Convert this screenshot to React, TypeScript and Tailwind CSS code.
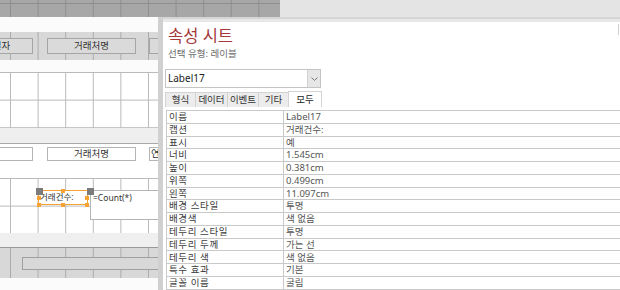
import React from 'react';

const rows: [string, string][] = [
  ['이름', 'Label17'],
  ['캡션', '거래건수:'],
  ['표시', '예'],
  ['너비', '1.545cm'],
  ['높이', '0.381cm'],
  ['위쪽', '0.499cm'],
  ['왼쪽', '11.097cm'],
  ['배경 스타일', '투명'],
  ['배경색', '색 없음'],
  ['테두리 스타일', '투명'],
  ['테두리 두께', '가는 선'],
  ['테두리 색', '색 없음'],
  ['특수 효과', '기본'],
  ['글꼴 이름', '굴림'],
];

const tabs = [
  { name: '형식', w: 'w-[30px]' },
  { name: '데이터', w: 'w-[32px]' },
  { name: '이벤트', w: 'w-[31px]' },
  { name: '기타', w: 'w-[30px]' },
];

// grid backgrounds for the report designer sections
const whiteGrid =
  'bg-white bg-[linear-gradient(to_right,#b9b9b9_1px,transparent_1px),linear-gradient(to_bottom,#b9b9b9_1px,transparent_1px)] bg-size-[27.6px_27.6px] bg-position-[10px_0px]';
const bandGrid =
  'bg-[#d8d8d8] bg-[linear-gradient(to_right,#ababab_1px,transparent_1px)] bg-size-[27.6px_27.6px] bg-position-[10px_0px]';

function Designer() {
  return (
    <div className="w-[158px] flex flex-col overflow-hidden text-[9.5px] leading-none text-[#333]">
      <div className="h-[15px] bg-[#fbfbfb]" />

      {/* page header band */}
      <div className={`h-[28px] relative ${bandGrid}`}>
        <div className="absolute left-[-30px] top-[6px] w-[63px] h-[16px] border border-[#a5a5a5] bg-[#dadada] flex items-center justify-center">
          일자
        </div>
        <div className="absolute left-[47px] top-[6px] w-[89px] h-[16px] border border-[#a5a5a5] bg-[#dadada] flex items-center justify-center">
          거래처명
        </div>
        <div className="absolute left-[149px] top-[6px] w-[40px] h-[16px] border border-[#a5a5a5] bg-[#dadada]" />
      </div>

      <div className="h-[12px] bg-[#fbfbfb]" />
      <div className={`h-[56px] ${whiteGrid}`} />
      <div className="h-[15px] bg-[#efefef]" />

      {/* group header */}
      <div className="h-[35px] relative bg-white border-t border-[#a9a9a9]">
        <div className="absolute left-[-30px] top-[3px] w-[63px] h-[14px] border border-[#b5b5b5] bg-white" />
        <div className="absolute left-[47px] top-[3px] w-[89px] h-[14px] border border-[#b5b5b5] bg-white flex items-center justify-center">
          거래처명
        </div>
        <div className="absolute left-[149px] top-[3px] w-[40px] h-[14px] border border-[#b5b5b5] bg-white flex items-center pl-[1px] whitespace-nowrap">
          연락처
        </div>
      </div>

      {/* detail with selected label */}
      <div className={`h-[55px] relative ${whiteGrid}`}>
        <div className="absolute left-[38px] top-[12px] w-[50px] h-[15px] border border-[#f7a234] bg-white flex items-center pl-[1px] text-[8.5px] whitespace-nowrap">
          거래건수:
        </div>
        <div className="absolute left-[90px] top-[12px] w-[80px] h-[30px] border border-[#b5b5b5] bg-white pl-[2px] pt-[3px] text-[8.5px] whitespace-nowrap">
          =Count(*)
        </div>
        <div className="absolute left-[36px] top-[10px] w-[7px] h-[7px] bg-[#7b7b7b]" />
        <div className="absolute left-[87px] top-[10px] w-[7px] h-[7px] bg-[#7b7b7b]" />
        <div className="absolute left-[61px] top-[11px] w-[4px] h-[4px] bg-[#f7a234]" />
        <div className="absolute left-[37px] top-[18px] w-[4px] h-[4px] bg-[#f7a234]" />
        <div className="absolute left-[85px] top-[18px] w-[4px] h-[4px] bg-[#f7a234]" />
        <div className="absolute left-[37px] top-[25px] w-[4px] h-[4px] bg-[#f7a234]" />
        <div className="absolute left-[61px] top-[25px] w-[4px] h-[4px] bg-[#f7a234]" />
        <div className="absolute left-[85px] top-[25px] w-[4px] h-[4px] bg-[#f7a234]" />
      </div>

      <div className="h-[14px] bg-[#efefef]" />

      {/* page footer band */}
      <div className={`h-[31px] relative border-t border-[#9a9a9a] ${bandGrid}`}>
        <div className="absolute left-[22px] top-[9px] w-[150px] h-[13px] border border-[#a0a0a0] bg-[#d8d8d8]" />
      </div>

      <div className="h-[12px] bg-[#fbfbfb]" />
    </div>
  );
}

function PropertySheet() {
  return (
    <div className="flex-1 flex flex-col border-t-2 border-[#d5d5d5] bg-white relative">
      <div className="h-[3px] bg-[#e7e7e7]" />
      <div className="absolute right-[1px] top-[5px] w-[1px] h-[11px] bg-[#cfcfcf]" />
      <div className="pl-[5px] mt-[2px] text-[16.5px] leading-[23px] text-[#a4373a]">속성 시트</div>
      <div className="pl-[5px] text-[9.5px] leading-[13px] text-[#6a6a6a]">선택 유형: 레이블</div>

      <div className="ml-[2px] mt-[9px] w-[156px] h-[19px] border border-[#c4c4c4] flex">
        <div className="flex-1 pl-[2px] text-[10px] leading-[17px] text-[#222]">Label17</div>
        <div className="w-[13px] bg-[#e6e6e6] border-l border-[#d0d0d0] flex items-center justify-center">
          <svg width="7" height="4" viewBox="0 0 7 4">
            <path d="M0.5 0.5 L3.5 3.5 L6.5 0.5" fill="none" stroke="#777" strokeWidth="1" />
          </svg>
        </div>
      </div>

      <div className="ml-[2px] mt-[3px] h-[16px] flex items-end text-[9.5px] text-[#333] whitespace-nowrap">
        {tabs.map((t) => (
          <div
            key={t.name}
            className={`${t.w} h-[15px] bg-[#ececec] border border-r-0 border-b-0 border-[#d3d3d3] flex items-center justify-center leading-none`}
          >
            {t.name}
          </div>
        ))}
        <div className="w-[34px] h-[16px] bg-white border border-b-0 border-[#d3d3d3] flex items-center justify-center leading-none text-[#222]">
          모두
        </div>
      </div>

      <div className="ml-[3px] mt-[3px] border-l border-t border-[#c9c9c9] text-[9.5px]">
        {rows.map(([k, v]) => (
          <div key={k} className="h-[12.77px] grid grid-cols-[117px_1fr] border-b border-[#c9c9c9]">
            <div className="pl-[2px] border-r border-[#c9c9c9] text-[#3c3c3c] tracking-[0.6px] whitespace-nowrap flex items-center leading-none">
              {k}
            </div>
            <div className="pl-[2px] text-[#555] whitespace-nowrap flex items-center leading-none">{v}</div>
          </div>
        ))}
      </div>
    </div>
  );
}

export default function App() {
  return (
    <div className="w-[620px] h-[290px] overflow-hidden bg-white flex flex-col font-['Noto_Sans','Noto_Sans_CJK_KR',sans-serif]">
      <div className="h-[17px] flex">
        <div className="w-[280px] bg-[#a7a7a7] bg-[linear-gradient(to_right,#8e8e8e_1px,transparent_1px),linear-gradient(to_bottom,#8e8e8e_1px,transparent_1px)] bg-size-[27.6px_27.6px] bg-position-[10px_3px]" />
        <div className="flex-1 bg-[#e4e4e4]" />
      </div>
      <div className="flex-1 flex min-h-0">
        <Designer />
        <div className="w-[5px] bg-[#d0d0d0]" />
        <PropertySheet />
      </div>
    </div>
  );
}
